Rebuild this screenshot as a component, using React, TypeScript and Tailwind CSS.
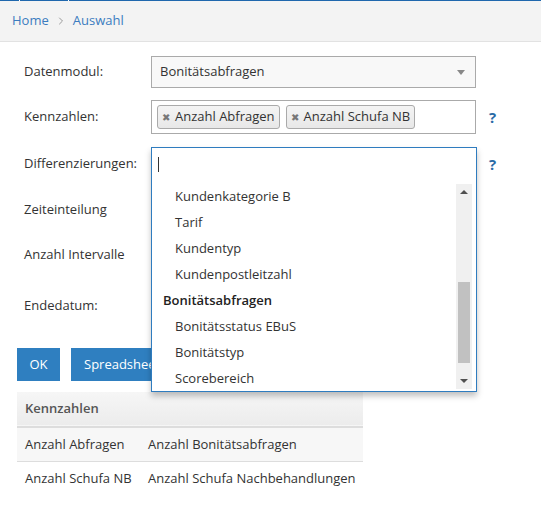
import { ChevronRight } from "lucide-react";

const font = { fontFamily: '"Open Sans", "Liberation Sans", sans-serif' };

type Opt = { label: string; group?: boolean };

const OPTIONS: Opt[] = [
  { label: "Kundenkategorie B" },
  { label: "Tarif" },
  { label: "Kundentyp" },
  { label: "Kundenpostleitzahl" },
  { label: "Bonitätsabfragen", group: true },
  { label: "Bonitätsstatus EBuS" },
  { label: "Bonitätstyp" },
  { label: "Scorebereich" },
];

function TopBar() {
  return (
    <div className="bg-[#f3f3f3] border-b border-[#e2e2e2]">
      <div className="flex h-px gap-px bg-white">
        <div className="w-[19px] bg-[#1f67ad]" />
        <div className="w-[48px] bg-[#1f67ad]" />
        <div className="flex-1 bg-[#1f67ad]" />
      </div>
      <div className="flex h-[40px] items-center px-3 text-[13px] text-[#3b7cc0]">
        <span>Home</span>
        <ChevronRight className="mx-[6px] h-3 w-3 text-[#9a9a9a]" strokeWidth={2} />
        <span>Auswahl</span>
      </div>
    </div>
  );
}

function Help() {
  return (
    <span className="ml-[13px] text-[15px] font-bold text-[#2a6aa6] leading-none">?</span>
  );
}

function Pill({ text }: { text: string }) {
  return (
    <span className="flex h-[24px] items-center gap-[5px] rounded-[3px] border border-[#aaa] bg-gradient-to-b from-[#f4f4f4] to-[#e8e8e8] px-[4px] text-[13px] text-[#333]">
      <span className="text-[10px] text-[#777]">✖</span>
      {text}
    </span>
  );
}

function Dropdown() {
  return (
    <div className="absolute left-0 top-0 z-10 w-[326px] border border-[#2f7cbf] bg-white shadow-[0_4px_6px_rgba(0,0,0,0.25)]">
      <div className="flex h-[33px] items-center px-[6px]">
        <span className="h-[15px] w-px bg-[#333]" />
      </div>
      <div className="flex h-[210px] pl-[11px] pr-[4px]">
        <div className="flex-1 overflow-hidden pt-[3px] text-[13px] text-[#333]">
          {OPTIONS.map((o) => (
            <div
              key={o.label}
              className={
                o.group
                  ? "flex h-[26px] items-center font-semibold text-[#222]"
                  : "flex h-[26px] items-center pl-[12px]"
              }
            >
              {o.label}
            </div>
          ))}
        </div>
        <div className="mt-[3px] mb-[2px] flex w-[16px] flex-col bg-[#f0f0f0]">
          <div className="flex h-[16px] items-center justify-center">
            <span className="h-0 w-0 border-x-[4px] border-b-[4px] border-x-transparent border-b-[#505050]" />
          </div>
          <div className="h-[82px]" />
          <div className="mx-[2px] h-[81px] bg-[#c1c1c1]" />
          <div className="flex-1" />
          <div className="flex h-[16px] items-center justify-center">
            <span className="h-0 w-0 border-x-[4px] border-t-[4px] border-x-transparent border-t-[#505050]" />
          </div>
        </div>
      </div>
    </div>
  );
}

function Row({ label, h, mt, children }: { label: string; h: number; mt: string; children?: React.ReactNode }) {
  return (
    <div className={`flex items-center ${mt}`} style={{ height: h }}>
      <span className="w-[127px] text-[13px] text-[#333]">{label}</span>
      {children}
    </div>
  );
}

export default function App() {
  return (
    <div className="h-[508px] w-[541px] overflow-hidden bg-white" style={font}>
      <TopBar />
      <div className="pl-[24px]">
        <Row label="Datenmodul:" h={32} mt="mt-[14px]">
          <div className="flex h-[32px] w-[325px] items-center justify-between border border-[#aaa] bg-[#f8f8f8] px-[8px] text-[13px] text-[#333]">
            <span>Bonitätsabfragen</span>
            <span className="mr-[2px] h-0 w-0 border-x-[4px] border-t-[5px] border-x-transparent border-t-[#888]" />
          </div>
        </Row>
        <Row label="Kennzahlen:" h={34} mt="mt-[12px]">
          <div className="flex h-[34px] w-[325px] items-center gap-[6px] border border-[#aaa] bg-white px-[5px]">
            <Pill text="Anzahl Abfragen" />
            <Pill text="Anzahl Schufa NB" />
          </div>
          <Help />
        </Row>
        <Row label="Differenzierungen:" h={34} mt="mt-[13px]">
          <div className="relative h-[34px] w-[325px]">
            <Dropdown />
          </div>
          <Help />
        </Row>
        <Row label="Zeiteinteilung" h={20} mt="mt-[19px]" />
        <Row label="Anzahl Intervalle" h={20} mt="mt-[25px]" />
        <Row label="Endedatum:" h={20} mt="mt-[31px]" />
      </div>
      <div className="mt-[32px] flex gap-[11px] pl-[17px]">
        <button className="h-[33px] w-[43px] bg-[#2f7fc0] text-[13px] text-white">OK</button>
        <button className="h-[33px] bg-[#2f7fc0] px-[13px] text-[13px] text-white">Spreadsheet</button>
      </div>
      <table className="ml-[17px] mt-[11px] w-[346px] text-left text-[13px] text-[#333]">
        <thead>
          <tr className="h-[35px] border-b-2 border-[#ddd] bg-gradient-to-b from-[#f6f6f6] to-[#ececec]">
            <th colSpan={2} className="px-[8px] font-semibold text-[#555]">Kennzahlen</th>
          </tr>
        </thead>
        <tbody>
          <tr className="h-[34px] border-b border-[#ddd] bg-[#f7f7f7]">
            <td className="pl-[8px] w-[131px]">Anzahl Abfragen</td>
            <td>Anzahl Bonitätsabfragen</td>
          </tr>
          <tr className="h-[34px]">
            <td className="pl-[8px]">Anzahl Schufa NB</td>
            <td>Anzahl Schufa Nachbehandlungen</td>
          </tr>
        </tbody>
      </table>
    </div>
  );
}
